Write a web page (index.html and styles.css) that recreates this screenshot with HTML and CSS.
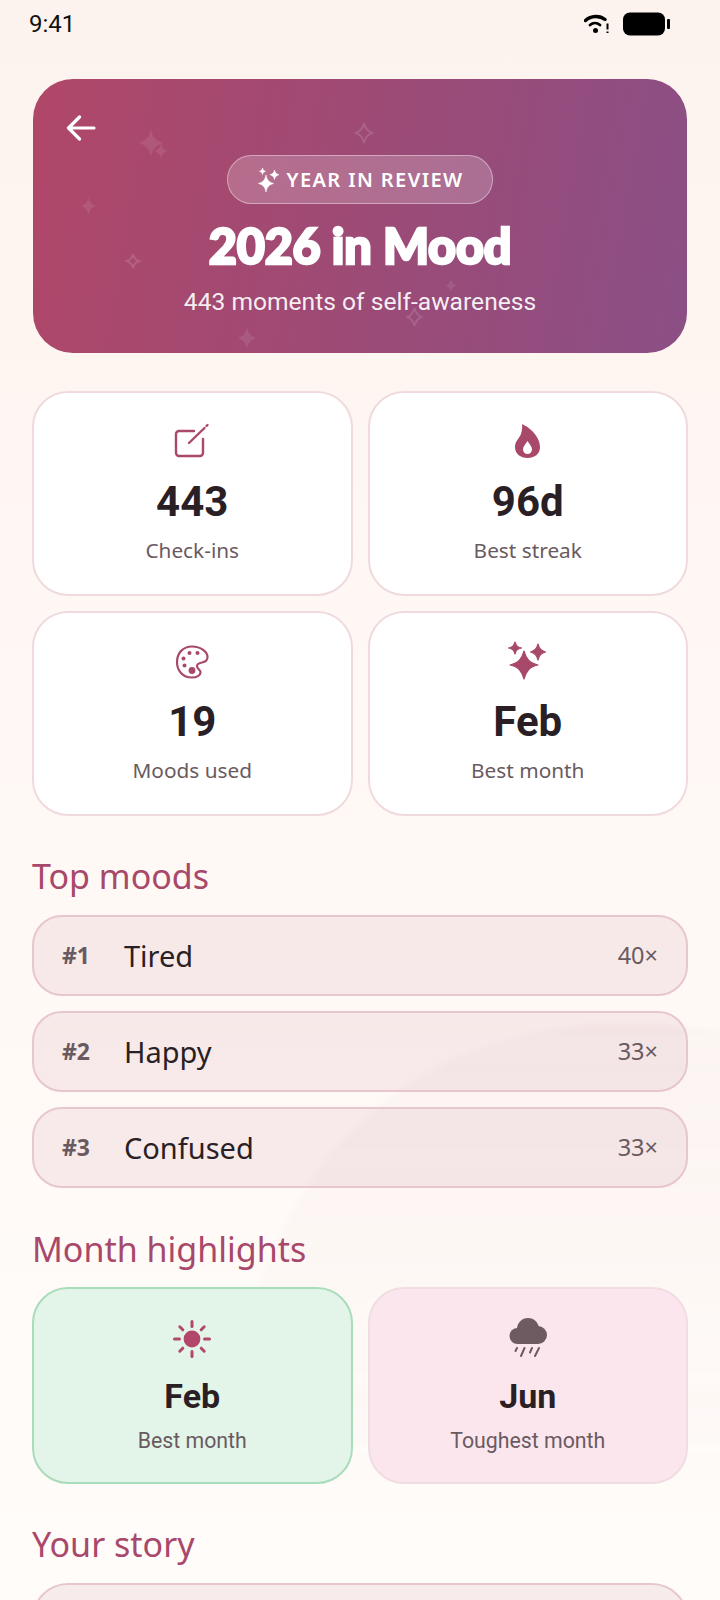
FILE: index.html
```html
<!DOCTYPE html>
<html lang="en">
<head>
<meta charset="utf-8">
<title>2026 in Mood</title>
<link rel="stylesheet" href="styles.css">
</head>
<body>
<div class="screen">
<svg class="backdrop" width="720" height="1600" viewBox="0 0 720 1600" aria-hidden="true">
  <defs>
    <linearGradient id="blobFade" x1="0" y1="1024" x2="0" y2="1500" gradientUnits="userSpaceOnUse"><stop offset="0" stop-color="#be8c96" stop-opacity="0.05"/><stop offset="0.45" stop-color="#be8c96" stop-opacity="0.028"/><stop offset="1" stop-color="#be8c96" stop-opacity="0"/></linearGradient>
    <filter id="blobSoft"><feGaussianBlur stdDeviation="2"/></filter>
  </defs>
  <path d="M250 1320C285 1170 400 1035 600 1024 650 1022 690 1026 740 1034V1620H250z" fill="url(#blobFade)" filter="url(#blobSoft)"/>
</svg>
<div class="status">
  <span class="time">9:41</span>
  <div class="status-icons">
    <svg class="wifi" width="26" height="20" viewBox="0 0 26 20"><path d="M1.500 6.500C7 1.500 15.500 1.200 21 5.500" fill="none" stroke="#000" stroke-width="3.400" stroke-linecap="round"/><path d="M6 11c3-2.600 7-2.600 10 0" fill="none" stroke="#000" stroke-width="2.800" stroke-linecap="round"/><circle cx="11.500" cy="16.500" r="2.500" fill="#000"/><path d="M23.500 9.500v6M23.500 17.500v1.500" stroke="#000" stroke-width="2"/></svg>
    <svg class="battery" width="47" height="24" viewBox="0 0 47 24"><rect x="0" y="0.500" width="42" height="23" rx="7" fill="#000"/><rect x="44" y="7" width="3" height="10" rx="1" fill="#000"/></svg>
  </div>
</div>

<main class="page">
  <section class="hero">
    <svg class="deco" width="654" height="274" viewBox="0 0 654 274" aria-hidden="true">
      <g fill="#fff" fill-opacity="0.09">
        <path d="M118 50c1.500 8 4 11 12 14-8 3-10.500 6-12 14-1.500-8-4-11-12-14 8-3 10.500-6 12-14z"/>
        <path d="M128 64c.8 4.500 2 6 6.500 8-4.500 2-5.700 3.500-6.500 8-.8-4.500-2-6-6.500-8 4.500-2 5.700-3.500 6.500-8z"/>
        <path d="M55.500 118c1 5 2.500 7 7.500 9-5 2-6.500 4-7.500 9-1-5-2.500-7-7.500-9 5-2 6.500-4 7.500-9z"/>
        <path d="M214 248c1.200 6 3 8.500 9 11-6 2.500-7.800 5-9 11-1.200-6-3-8.500-9-11 6-2.500 7.800-5 9-11z"/>
        <path d="M418 200c.8 3.500 2 5 5.500 6.500-3.500 1.500-4.700 3-5.500 6.500-.8-3.500-2-5-5.500-6.500 3.500-1.500 4.700-3 5.500-6.500z"/>
      </g>
      <g fill="none" stroke="#fff" stroke-opacity="0.13" stroke-width="2">
        <path d="M331 44c1 5.500 3 8 8 10-5 2-7 4.500-8 10-1-5.500-3-8-8-10 5-2 7-4.500 8-10z"/>
        <path d="M100 175c.9 4 2.200 5.800 6 7-3.800 1.200-5.100 3-6 7-.9-4-2.200-5.800-6-7 3.800-1.200 5.100-3 6-7z"/>
        <path d="M381.500 229c1 4.500 2.500 7 7 9-4.500 2-6 4.500-7 9-1-4.500-2.500-7-7-9 4.500-2 6-4.500 7-9z"/>
      </g>
    </svg>
    <svg class="back" width="30" height="26" viewBox="0 0 30 26" aria-hidden="true"><path d="M28 13H3M13.500 2 2.500 13l11 11" fill="none" stroke="#fff" stroke-width="3.200" stroke-linecap="round" stroke-linejoin="round"/></svg>
    <div class="pill">
      <svg width="24" height="26" viewBox="0 0 24 26" aria-hidden="true"><g fill="#fff" stroke="#fff" stroke-width="0.600" stroke-linejoin="round"><path d="M10 8c1 5 2.800 7 7.500 8.500C12.800 18 11 20 10 25c-1-5-2.800-7-7.500-8.500C7.200 15 9 13 10 8z"/><path d="M18.500 3c.6 2.800 1.600 3.800 4.500 4.700-2.900.9-3.900 1.900-4.500 4.700-.6-2.800-1.600-3.800-4.500-4.700 2.900-.9 3.900-1.900 4.500-4.700z"/><path d="M6.500 1c.4 2 1 2.700 3 3.300-2 .6-2.600 1.300-3 3.300-.4-2-1-2.700-3-3.300 2-.6 2.600-1.300 3-3.300z"/></g></svg>
      <span>YEAR IN REVIEW</span>
    </div>
    <h1 class="hero-title">2026 in Mood</h1>
    <p class="hero-sub">443 moments of self-awareness</p>
  </section>

  <section class="grid stats">
    <article class="card">
      <svg class="icon" width="44" height="44" viewBox="0 0 44 44" aria-hidden="true"><path d="M24 10H9a3 3 0 0 0-3 3v19a3 3 0 0 0 3 3h21a3 3 0 0 0 3-3V18" fill="none" stroke="#a8486a" stroke-width="2.400" stroke-linecap="round"/><path d="M19 22 34.500 7M36.500 5l1-1" fill="none" stroke="#a8486a" stroke-width="2.400" stroke-linecap="round"/></svg>
      <strong class="value">443</strong>
      <span class="label">Check-ins</span>
    </article>
    <article class="card">
      <svg class="icon" width="44" height="44" viewBox="0 0 44 44" aria-hidden="true"><path fill-rule="evenodd" fill="#a8486a" d="M16 3c7 3 18 12 18 23 0 7-5.500 11-12.500 11S9 33 9 26c0-6 4-8 6-13 1-3 1.500-7 1-10zM21.500 20c-2.500 3.500-4.500 6-4.500 8.500a4.500 4.500 0 0 0 9 0c0-2.500-2-5-4.500-8.500z"/></svg>
      <strong class="value">96d</strong>
      <span class="label">Best streak</span>
    </article>
    <article class="card">
      <svg class="icon" width="44" height="44" viewBox="0 0 44 44" aria-hidden="true"><path d="M22 5.500c9 0 15.500 5.500 15.500 10.500 0 3.500-2.500 5-5.500 5.500-3 .5-5 1.500-5 3.500 0 3 3.500 3.500 3.500 6.500 0 3-4 5-8.500 5C12.500 36.500 7 29.500 7 21 7 12 13 5.500 22 5.500z" fill="none" stroke="#a8486a" stroke-width="2.200" stroke-linejoin="round"/><g fill="#a8486a"><circle cx="19.500" cy="12" r="2"/><circle cx="27.500" cy="12" r="2"/><circle cx="13.500" cy="17.500" r="2"/><circle cx="14.500" cy="24.500" r="2"/><circle cx="22" cy="29.500" r="3.400"/></g></svg>
      <strong class="value">19</strong>
      <span class="label">Moods used</span>
    </article>
    <article class="card">
      <svg class="icon" width="44" height="44" viewBox="0 0 44 44" aria-hidden="true"><g fill="#a8486a" stroke="#a8486a" stroke-width="1.200" stroke-linejoin="round"><path d="M18 10c2 8 5.500 12 14 14-8.500 2-12 6-14 14-2-8-5.500-12-14-14 8.500-2 12-6 14-14z"/><path d="M9 1c1 4 2.500 5 6.500 6C11.500 8 10 9 9 13 8 9 6.500 8 2.500 7 6.500 6 8 5 9 1z"/><path d="M32 3c1 4.500 3 7 7.500 8-4.500 1-6.500 3.500-7.500 8-1-4.500-3-7-7.500-8 4.500-1 6.500-3.500 7.500-8z"/></g></svg>
      <strong class="value">Feb</strong>
      <span class="label">Best month</span>
    </article>
  </section>

  <h2 class="section-title first">Top moods</h2>
  <section class="rows">
    <div class="row"><span class="rank">#1</span><span class="name">Tired</span><span class="count">40×</span></div>
    <div class="row"><span class="rank">#2</span><span class="name">Happy</span><span class="count">33×</span></div>
    <div class="row"><span class="rank">#3</span><span class="name">Confused</span><span class="count">33×</span></div>
  </section>

  <h2 class="section-title mid">Month highlights</h2>
  <section class="grid">
    <article class="card small good">
      <svg class="icon" width="44" height="44" viewBox="0 0 44 44" aria-hidden="true"><circle cx="22" cy="22" r="8.400" fill="#b2466b"/><path d="M22 4.500v5M22 34.500v5M4.500 22h5M34.500 22h5M9.800 9.800l3 3M31.200 31.200l3 3M9.800 34.200l3-3M31.200 12.800l3-3" stroke="#b2466b" stroke-width="3" stroke-linecap="round"/></svg>
      <strong class="value">Feb</strong>
      <span class="label">Best month</span>
    </article>
    <article class="card small bad">
      <svg class="icon" width="44" height="44" viewBox="0 0 44 44" aria-hidden="true"><g fill="#6e5a61"><circle cx="22" cy="12" r="11"/><circle cx="11.500" cy="19" r="8"/><circle cx="32" cy="18" r="9"/><rect x="11.500" y="14" width="20.500" height="13"/></g><path d="M11 31l-1.500 3M18.500 31l-3.500 8M26 31l-2 4.500M33 31l-4 8" stroke="#6e5a61" stroke-width="2" stroke-linecap="round"/></svg>
      <strong class="value">Jun</strong>
      <span class="label">Toughest month</span>
    </article>
  </section>

  <h2 class="section-title last">Your story</h2>
  <section class="story"></section>
</main>
</div>
</body>
</html>
```

FILE: styles.css
```css
* { box-sizing: border-box; }
html, body { margin: 0; }
.screen {
  position: relative;
  height: 1600px;
  overflow: hidden;
  background: linear-gradient(180deg, #fdf3ee 0%, #fff8f4 45%, #fffcf9 100%);
  color: #2a1f24;
  font-family: "Noto Sans", "Lato", sans-serif;
}
.backdrop {
  position: absolute;
  left: 0;
  top: 0;
  display: block;
}
.status {
  position: relative;
  height: 48px;
  padding: 0 50px 0 29px;
  display: flex;
  align-items: center;
  justify-content: space-between;
}
.time { font: 400 24px/1 "Roboto", sans-serif; color: #111; }
.status-icons { display: flex; align-items: center; gap: 13px; }
.wifi, .battery { display: block; }
.page { position: relative; padding: 31px 32px 0; }
.hero {
  position: relative;
  height: 274px;
  margin: 0 1px;
  border-radius: 40px;
  background: linear-gradient(100deg, #b04769 0%, #9f4a74 45%, #8b4f85 100%);
  color: #fff;
  display: flex;
  flex-direction: column;
  align-items: center;
  padding-top: 76px;
  overflow: hidden;
}
.deco { position: absolute; left: 0; top: 0; }
.back { position: absolute; left: 33px; top: 36px; }
.pill {
  position: relative;
  width: 266px;
  height: 49px;
  display: flex;
  align-items: center;
  justify-content: center;
  gap: 6px;
  border-radius: 25px;
  background: rgba(255, 255, 255, 0.2);
  border: 1.500px solid rgba(255, 255, 255, 0.4);
  font: 600 20px/1 "Noto Sans", sans-serif;
  letter-spacing: 1.400px;
}
.hero-title {
  position: relative;
  margin: 12px 0 0;
  font: 900 48.500px/58px "Lato", sans-serif;
  letter-spacing: -0.2px;
  color: #fff;
  -webkit-text-stroke: 2.500px #fff;
  paint-order: stroke fill;
  stroke-linejoin: round;
}
.hero-sub {
  position: relative;
  margin: 13px 0 0;
  font: 400 24.600px/30px "Roboto", sans-serif;
  color: rgba(255, 255, 255, 0.92);
}
.grid {
  display: grid;
  grid-template-columns: 1fr 1fr;
  gap: 15px;
}
.stats { margin-top: 38px; }
.card {
  height: 205px;
  border-radius: 36px;
  background: #fff;
  border: 2px solid #f0dade;
  display: flex;
  flex-direction: column;
  align-items: center;
  padding-top: 28px;
}
.icon { display: block; flex: none; }
.value {
  margin-top: 11px;
  font: 700 42px/52px "Roboto", sans-serif;
  color: #2a1f24;
}
.label {
  margin-top: 8px;
  font: 400 20.800px/28px "Noto Sans", sans-serif;
  color: #6a5a60;
}
.section-title {
  margin: 40px 0 17px;
  font: 400 34px/44px "Noto Sans", sans-serif;
  color: #a8486a;
}
.section-title.first { margin-top: 38px; }
.section-title.mid { margin-top: 39px; margin-bottom: 16px; }
.section-title.last { margin-top: 38px; }
.rows {
  display: flex;
  flex-direction: column;
  gap: 15px;
}
.row {
  height: 81px;
  display: flex;
  align-items: center;
  padding: 0 28px;
  border-radius: 30px;
  background: rgba(168, 72, 106, 0.085);
  border: 2px solid #e8c6cd;
}
.rank {
  width: 62px;
  font: 700 23px/1 "Noto Sans", sans-serif;
  color: #6a5a60;
}
.name {
  flex: 1;
  font: 400 29px/1 "Noto Sans", sans-serif;
  color: #2a1f24;
}
.count {
  font: 400 23.500px/1 "Noto Sans", sans-serif;
  color: #6a5a60;
}
.card.small { height: 197px; padding-top: 28px; }
.card.small .value { margin-top: 13px; font-size: 34px; line-height: 44px; }
.card.small .label { margin-top: 9px; font: 400 21.300px/28px "Roboto", sans-serif; }
.good { background: #e3f5e9; border-color: #a9dcba; }
.bad { background: #fbe6ee; border-color: #f0dde3; }
.story {
  height: 120px;
  border-radius: 36px;
  background: rgba(168, 72, 106, 0.085);
  border: 2px solid #e8c6cd;
}
```
